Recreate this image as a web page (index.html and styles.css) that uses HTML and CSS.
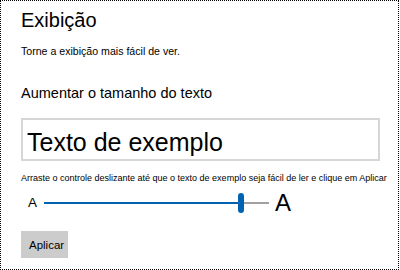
FILE: index.html
```html
<!DOCTYPE html>
<html lang="pt-BR">
<head>
    <meta charset="UTF-8">
    <meta name="viewport" content="width=device-width, initial-scale=1.0">
    <link rel="stylesheet" href="styles.css">
    <title>Exibição</title>
</head>
<body>

    <div class="panel">
        <h1 class="title">Exibição</h1>
        <p class="subtitle">Torne a exibição mais fácil de ver.</p>

        <h2 class="section">Aumentar o tamanho do texto</h2>
        <div class="preview">Texto de exemplo</div>
        <p class="hint">Arraste o controle deslizante até que o texto de exemplo seja fácil de ler e clique em Aplicar</p>

        <div class="slider-row">
            <span class="a-small">A</span>
            <div class="slider">
                <div class="fill"></div>
                <div class="thumb"></div>
                <div class="rest"></div>
            </div>
            <span class="a-large">A</span>
        </div>

        <button class="apply">Aplicar</button>
    </div>

</body>
</html>
```

FILE: styles.css
```css
body {
    margin: 0;
    font-family: 'Liberation Sans', Arial, sans-serif;
    color: #000;
    background-color: #fff;
}

.panel {
    box-sizing: border-box;
    width: 399px;
    height: 270px;
    border: 1px dotted #000;
    padding: 7px 0 0 20px;
}

.title {
    margin: 0;
    font-size: 20px;
    font-weight: normal;
    line-height: 24px;
}

.subtitle {
    margin: 12px 0 0;
    font-size: 10.6px;
    line-height: 14px;
}

.section {
    margin: 26px 0 0;
    font-size: 14.5px;
    font-weight: normal;
    line-height: 18px;
}

.preview {
    width: 351px;
    height: 33px;
    margin-top: 16px;
    padding: 6px 0 0 4px;
    border: 2px solid #d6d6d6;
    font-size: 25px;
    line-height: 33px;
}

.hint {
    margin: 11px 0 0;
    font-size: 9px;
    line-height: 12px;
    white-space: nowrap;
}

.slider-row {
    display: flex;
    align-items: center;
    height: 24px;
    margin-top: 7px;
    padding-left: 7px;
}

.a-small {
    font-size: 13.5px;
    line-height: 16px;
}

.slider {
    display: flex;
    align-items: center;
    margin-left: 7px;
    width: 225px;
}

.fill {
    width: 194px;
    height: 2px;
    background-color: #0063b1;
}

.thumb {
    width: 6px;
    height: 20px;
    border-radius: 3px;
    background-color: #0063b1;
}

.rest {
    flex: 1;
    height: 2px;
    background-color: #a0a0a0;
}

.a-large {
    margin-left: 6px;
    font-size: 24px;
    line-height: 24px;
}

.apply {
    display: block;
    height: 27px;
    margin-top: 16px;
    padding: 0 4px 0 8px;
    border: none;
    background-color: #cccccc;
    font-family: 'Liberation Sans', Arial, sans-serif;
    font-size: 11.5px;
    color: #000;
}
```
